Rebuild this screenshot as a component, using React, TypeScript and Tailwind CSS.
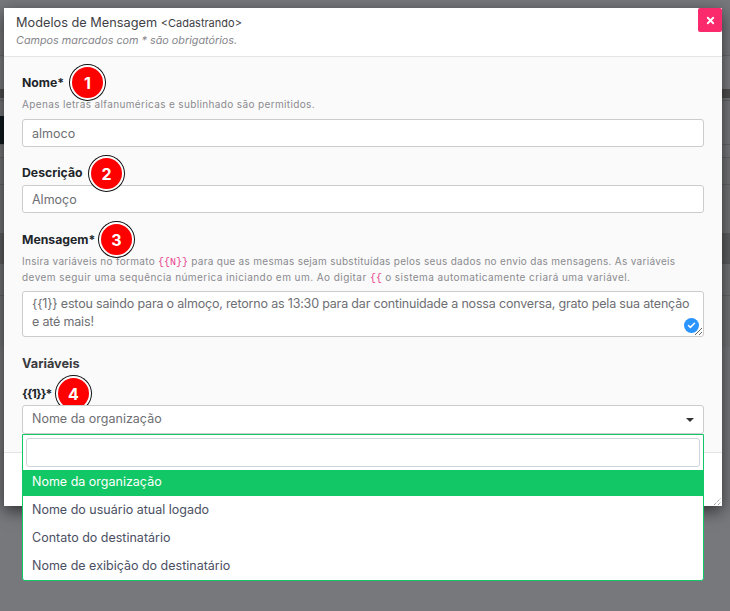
import { Check, X } from "lucide-react";

const FONT = "font-['Inter','Liberation_Sans',sans-serif]";

function Badge({ n, className }: { n: number; className: string }) {
  return (
    <span
      className={`absolute flex h-[35px] w-[35px] items-center justify-center rounded-full border-2 border-white bg-[#ff0000] text-[16px] font-bold tracking-normal text-white shadow-[0_0_0_1px_#111] ${className}`}
    >
      {n}
    </span>
  );
}

function Label({ children, className = "" }: { children: React.ReactNode; className?: string }) {
  return <label className={`relative block w-fit text-[12.25px] leading-[18px] font-bold text-[#212529] ${className}`}>{children}</label>;
}

function TextBox({ value }: { value: string }) {
  return (
    <input
      readOnly
      value={value}
      className="block h-[28px] w-full rounded-[3px] border border-[#cccccc] bg-white px-[9px] text-[12.5px] text-[#6e6e73] outline-none"
    />
  );
}

function Backdrop() {
  return (
    <div className="flex h-[611px] flex-col overflow-hidden bg-[#77787c]">
      <div className="flex h-[50px] items-start justify-between border-b border-[#6a6b6e] pt-[55px]">
        <div className="mt-[-76px] ml-[-52px] text-[22px] leading-[22px] text-[#2e2e30]">Cadastrando</div>
        <div className="mr-[-10px] text-[13px] leading-[16px] text-[#2b4a66]">tro</div>
      </div>
      <div className="h-[33px] bg-[#7c7d80]" />
      <div className="h-[9px] bg-[#505050]" />
      <div className="h-[3px] border-b border-[#666]" />
      <div className="h-[15px]" />
      <div className="h-[28px] w-[8px] bg-[#101a1f]" />
      <div className="h-[1px] bg-[#666]" />
      <div className="h-[13px] border-b border-[#666]" />
      <div className="h-[27px] border-b border-[#666] bg-[#747577]" />
      <div className="h-[48px] bg-[#737476]" />
      <div className="h-[31px] border-b border-[#5c5c5c] bg-[#5e5f60]" />
      <div className="h-[32px] border-b border-[#666] bg-[#737476]" />
      <div className="h-[51px] bg-[#737476]" />
    </div>
  );
}

function Dropdown() {
  const options = ["Nome do usuário atual logado", "Contato do destinatário", "Nome de exibição do destinatário"];
  return (
    <div className="absolute top-[29px] left-0 z-10 w-full rounded-b-[3px] border border-[#12c765] bg-white">
      <div className="px-[3px] pt-[3px] pb-[3px]">
        <input readOnly className="block h-[29px] w-full rounded-[3px] border border-[#ced4da] bg-white outline-none" />
      </div>
      <div className="flex h-[26px] items-center bg-[#12c765] pb-[1px] pl-[9px] text-[12.5px] text-white">Nome da organização</div>
      <ul>
        {options.map((o) => (
          <li key={o} className="flex h-[28px] items-center pl-[9px] text-[12.5px] text-[#4b4f63]">
            {o}
          </li>
        ))}
      </ul>
    </div>
  );
}

export default function App() {
  return (
    <div className={`relative h-[611px] w-[730px] overflow-hidden ${FONT}`}>
      <Backdrop />
      <div className="absolute top-[8px] left-[4px] flex h-[498px] w-[718px] flex-col bg-white shadow-[0_5px_15px_rgba(0,0,0,0.6)]">
        <header className="relative h-[49px] border-b border-[#e4e4e7] pt-[7px] pl-[12px]">
          <h4 className="text-[12.75px] leading-[16px] text-[#3f3f46]">
            Modelos de Mensagem <small className="text-[11px]">&lt;Cadastrando&gt;</small>
          </h4>
          <p className="mt-[3px] text-[10.8px] leading-[14px] text-[#85858a] italic">Campos marcados com * são obrigatórios.</p>
          <button className="absolute top-0 right-0 flex h-[24px] w-[24px] items-center justify-center rounded-[2px] bg-[#fb2a6c] text-white">
            <X size={11} strokeWidth={4} />
          </button>
        </header>

        <div className="h-[395px] bg-[#fafafa] px-[18px] pt-[17px]">
          <Label>
            Nome*
            <Badge n={1} className="top-[-9px] left-[48px]" />
          </Label>
          <p className="mt-[5px] mb-[8px] text-[10px] leading-[14px] tracking-[0.36px] text-[#8a8a8f]">Apenas letras alfanuméricas e sublinhado são permitidos.</p>
          <TextBox value="almoco" />

          <Label className="mt-[17px] mb-[3px]">
            Descrição
            <Badge n={2} className="top-[-8px] left-[67px]" />
          </Label>
          <TextBox value="Almoço" />

          <Label className="mt-[18px]">
            Mensagem*
            <Badge n={3} className="top-[-9px] left-[77px]" />
          </Label>
          <p className="mt-[5px] mb-[5px] text-[10px] leading-[15px] tracking-[0.3px] text-[#8a8a8f]">
            <span className="block">
              Insira variáveis no formato <code className="font-['Liberation_Mono',monospace] tracking-normal text-[#e83e8c]">{"{{N}}"}</code> para que as mesmas sejam substituídas pelos seus dados no envio das mensagens. As variáveis
            </span>
            <span className="block tracking-[0.44px]">
              devem seguir uma sequência númerica iniciando em um. Ao digitar <code className="font-['Liberation_Mono',monospace] tracking-normal text-[#e83e8c]">{"{{"}</code> o sistema automaticamente criará uma variável.
            </span>
          </p>
          <div className="relative">
            <textarea
              readOnly
              value="{{1}} estou saindo para o almoço, retorno as 13:30 para dar continuidade a nossa conversa, grato pela sua atenção e até mais!"
              className="block h-[46px] w-full rounded-[3px] border border-[#cccccc] bg-white px-[9px] py-[3px] text-[12.5px] leading-[18px] tracking-[-0.18px] text-[#6e6e73] outline-none"
            />
            <span className="absolute right-[5px] bottom-[4px] flex h-[15px] w-[15px] items-center justify-center rounded-full bg-[#2b95ff] text-white">
              <Check size={9} strokeWidth={4} />
            </span>
          </div>

          <h5 className="mt-[18px] text-[12.75px] leading-[18px] font-bold text-[#3a3a3f]">Variáveis</h5>
          <Label className="mt-[12px] mb-[2px] tracking-[-1px]">
            {"{{1}}*"}
            <Badge n={4} className="top-[-9px] left-[34px]" />
          </Label>
          <div className="relative">
            <div className="flex h-[29px] items-center justify-between rounded-[3px] border border-[#cccccc] bg-white pr-[9px] pl-[9px] text-[12.5px] text-[#6e6e73]">
              Nome da organização
              <span className="h-0 w-0 border-x-[4px] border-t-[4px] border-x-transparent border-t-[#333]" />
            </div>
            <Dropdown />
          </div>
        </div>

        <footer className="relative flex-1 border-t border-[#e4e4e7] bg-white">
          <svg className="absolute right-0 bottom-0" width="9" height="9" viewBox="0 0 9 9" stroke="#555" strokeWidth="0.8" strokeDasharray="1 1">
            <path d="M1 8 8 1M5 8 8 5" />
          </svg>
        </footer>
      </div>
    </div>
  );
}
